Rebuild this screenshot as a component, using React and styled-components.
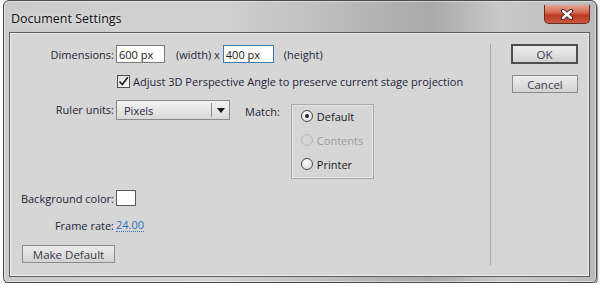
import styled, { createGlobalStyle } from 'styled-components';

const Global = createGlobalStyle`
  html, body { margin: 0; padding: 0; background: #ffffff; }
  body { font-family: "Open Sans", "Noto Sans", sans-serif; font-size: 11px; color: #23263a; }
`;

const Window = styled.div`
  margin-left: 3px;
  width: 594px;
  height: 283px;
  box-sizing: border-box;
  border: 1px solid #4a4a4a;
  border-radius: 6px 6px 5px 5px;
  padding: 0 6px 5px 5px;
  background: linear-gradient(90deg, #cbcbcb 0%, #d2d2d2 35%, #bdbdbd 55%, #a9a9a9 72%, #c9c9c9 84%, #b9b9b9 100%);
  box-shadow: inset 0 0 0 1px rgba(255,255,255,0.45), 1px 2px 2px rgba(0,0,0,0.45);
  display: flex;
  flex-direction: column;
`;

const TitleBar = styled.div`
  height: 31px;
  display: flex;
  justify-content: space-between;
  align-items: flex-start;
`;

const Title = styled.div`
  font-size: 12.5px;
  color: #101018;
  padding: 9px 0 0 2px;
  text-shadow: 0 0 6px rgba(255,255,255,0.9);
`;

const Close = styled.div`
  width: 46px;
  height: 19px;
  margin-top: 4px;
  box-sizing: border-box;
  border: 1px solid #6b2a20;
  border-top: none;
  border-radius: 0 0 5px 5px;
  background: linear-gradient(180deg, #e3a595 0%, #d4654e 45%, #bb3a22 55%, #c75a40 100%);
  display: flex;
  align-items: center;
  justify-content: center;
`;

const Panel = styled.div`
  flex: 1;
  display: flex;
  border: 1px solid #5d5d5d;
  box-shadow: inset 0 0 0 1px #eeeeee;
  background: #d6d6d6;
  padding: 1px;
`;

const Form = styled.div`
  flex: 1;
  display: flex;
  flex-direction: column;
  padding-top: 11px;
`;

const Row = styled.div`
  display: flex;
  align-items: ${p => (p.$top ? 'flex-start' : 'center')};
  margin-top: ${p => p.$mt || 0}px;
`;

const Label = styled.div`
  width: 103px;
  text-align: right;
  margin-right: 2px;
  white-space: nowrap;
  margin-top: ${p => p.$mt || 0}px;
`;

const Input = styled.div`
  width: ${p => p.$w}px;
  height: 18px;
  box-sizing: border-box;
  background: #ffffff;
  border: 1px solid ${p => (p.$focus ? '#3b7ab2' : '#7a7a7a')};
  padding: 1px 0 0 2px;
  line-height: 15px;
  color: #1a1a1a;
`;

const Unit = styled.span`
  margin-left: ${p => p.$ml}px;
  margin-right: ${p => p.$mr || 0}px;
  margin-top: ${p => p.$mt || 0}px;
`;

const CheckBox = styled.div`
  width: 13px;
  height: 13px;
  box-sizing: border-box;
  border: 1px solid #4e4e4e;
  background: linear-gradient(135deg, #dcdcdc, #fbfbfb);
  margin-left: 106px;
  margin-right: 3px;
  display: flex;
  align-items: center;
  justify-content: center;
`;

const Select = styled.div`
  width: 114px;
  height: 20px;
  box-sizing: border-box;
  border: 1px solid #8a8a8a;
  background: linear-gradient(180deg, #f2f2f2 0%, #e6e6e6 50%, #d9d9d9 100%);
  display: flex;
  align-items: center;
`;

const SelectText = styled.div`
  flex: 1;
  padding-left: 7px;
`;

const SelectArrow = styled.div`
  width: 17px;
  height: 14px;
  border-left: 1px solid #8a8a8a;
  display: flex;
  align-items: center;
  justify-content: center;
  &::after {
    content: '';
    border-left: 4px solid transparent;
    border-right: 4px solid transparent;
    border-top: 5px solid #1a1a1a;
  }
`;

const GroupBox = styled.div`
  margin-left: 11px;
  margin-top: 4px;
  width: 83px;
  height: 75px;
  box-sizing: border-box;
  border: 1px solid #a9a9a9;
  box-shadow: inset 0 0 0 1px #e6e6e6;
  display: flex;
  flex-direction: column;
  gap: 12px;
  padding: 5px 0 0 9px;
`;

const RadioRow = styled.div`
  display: flex;
  align-items: center;
  height: 12px;
  color: ${p => (p.$disabled ? '#9a9a9a' : '#1a1a1a')};
`;

const Radio = styled.div`
  width: 12px;
  height: 12px;
  box-sizing: border-box;
  border-radius: 50%;
  border: 1px solid ${p => (p.$disabled ? '#b3b3b3' : '#4a4a4a')};
  background: ${p => (p.$disabled ? '#d6d6d6' : 'radial-gradient(circle at 40% 35%, #fafafa, #d8d8d8)')};
  margin-right: 4px;
  display: flex;
  align-items: center;
  justify-content: center;
  &::after {
    content: '';
    display: ${p => (p.$checked ? 'block' : 'none')};
    width: 4px;
    height: 4px;
    border-radius: 50%;
    background: #222;
  }
`;

const Swatch = styled.div`
  width: 20px;
  height: 16px;
  box-sizing: border-box;
  border: 1px solid #5a5a5a;
  background: #ffffff;
`;

const Link = styled.span`
  color: #2f70b8;
  border-bottom: 1px dotted #2f70b8;
  line-height: 12px;
`;

const Button = styled.div`
  width: ${p => p.$w}px;
  height: ${p => p.$h || 18}px;
  box-sizing: border-box;
  border: ${p => (p.$default ? '2px solid #4f4f4f' : '1px solid #8c8c8c')};
  background: linear-gradient(180deg, #ececec 0%, #e0e0e0 50%, #d2d2d2 100%);
  display: flex;
  align-items: center;
  justify-content: center;
  color: #3b3b4a;
  font-size: 11.5px;
  margin-left: ${p => p.$ml || 0}px;
  margin-top: ${p => p.$mt || 0}px;
`;

const Separator = styled.div`
  width: 1px;
  background: #a8a8a8;
  margin: 10px 0 10px;
`;

const Side = styled.div`
  width: 67px;
  padding: 10px 10px 0 20px;
  display: flex;
  flex-direction: column;
`;

export default function App() {
  return (
    <>
      <Global />
      <Window>
        <TitleBar>
          <Title>Document Settings</Title>
          <Close>
            <svg width="14" height="11" viewBox="0 0 14 11">
              <path d="M3 2 L11 9 M11 2 L3 9" stroke="#3a1a14" strokeWidth="4.2" strokeLinecap="round" />
              <path d="M3 2 L11 9 M11 2 L3 9" stroke="#ffffff" strokeWidth="2.4" strokeLinecap="round" />
            </svg>
          </Close>
        </TitleBar>
        <Panel>
          <Form>
            <Row>
              <Label>Dimensions:</Label>
              <Input $w={49}>600 px</Input>
              <Unit $ml={11} $mr={3}>(width) x</Unit>
              <Input $w={51} $focus>400 px</Input>
              <Unit $ml={10}>(height)</Unit>
            </Row>
            <Row $mt={11}>
              <CheckBox>
                <svg width="11" height="11" viewBox="0 0 11 11">
                  <path d="M1.5 5.5 L4.3 8.6 L9.8 1.2" fill="none" stroke="#1e1e1e" strokeWidth="1.6" />
                </svg>
              </CheckBox>
              <span>Adjust 3D Perspective Angle to preserve current stage projection</span>
            </Row>
            <Row $top $mt={11}>
              <Label $mt={2}>Ruler units:</Label>
              <Select>
                <SelectText>Pixels</SelectText>
                <SelectArrow />
              </Select>
              <Unit $ml={15} $mt={4}>Match:</Unit>
              <GroupBox>
                <RadioRow><Radio $checked />Default</RadioRow>
                <RadioRow $disabled><Radio $disabled />Contents</RadioRow>
                <RadioRow><Radio />Printer</RadioRow>
              </GroupBox>
            </Row>
            <Row $mt={11}>
              <Label>Background color:</Label>
              <Swatch />
            </Row>
            <Row $mt={12}>
              <Label>Frame rate:</Label>
              <Link>24.00</Link>
            </Row>
            <Row $mt={12}>
              <Button $w={93} $ml={11}>Make Default</Button>
            </Row>
          </Form>
          <Separator />
          <Side>
            <Button $w={67} $h={20} $default>OK</Button>
            <Button $w={66} $mt={11} $ml={1}>Cancel</Button>
          </Side>
        </Panel>
      </Window>
    </>
  );
}
